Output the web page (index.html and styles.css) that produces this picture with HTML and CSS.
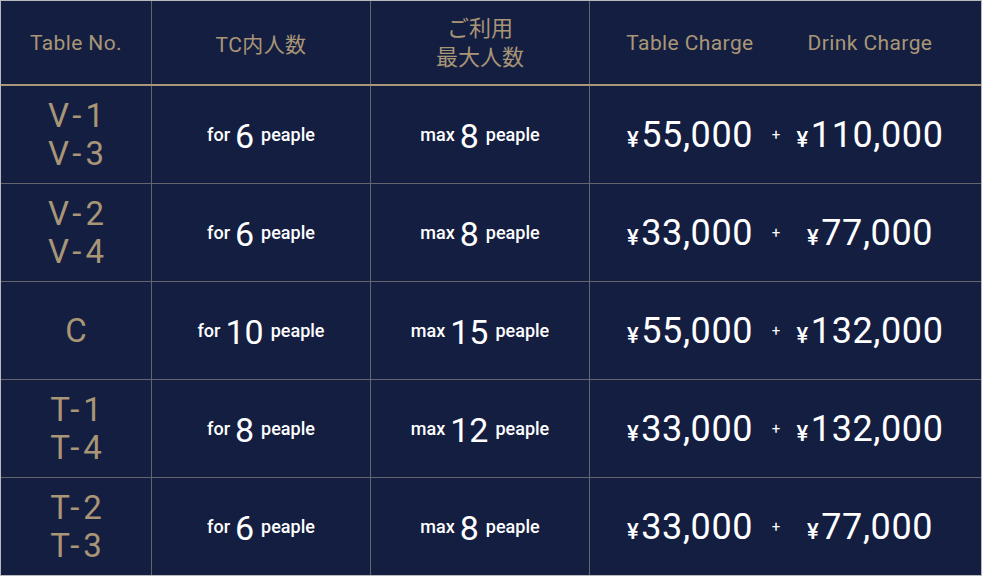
FILE: index.html
```html
<!DOCTYPE html>
<html lang="ja">
<head>
<meta charset="utf-8">
<link rel="stylesheet" href="styles.css">
</head>
<body>
<div class="price-table">
  <div class="row head">
    <div class="cell">Table No.</div>
    <div class="cell">TC内人数</div>
    <div class="cell cjk">ご利用<br>最大人数</div>
    <div class="cell charges">
      <span class="c-left">Table Charge</span>
      <span class="c-plus"></span>
      <span class="c-right">Drink Charge</span>
    </div>
  </div>

  <div class="row">
    <div class="cell tno">V-1<br>V-3</div>
    <div class="cell ppl">for <b>6</b> peaple</div>
    <div class="cell ppl">max <b>8</b> peaple</div>
    <div class="cell charges">
      <span class="c-left price"><i>¥</i>55,000</span>
      <span class="c-plus">+</span>
      <span class="c-right price"><i>¥</i>110,000</span>
    </div>
  </div>

  <div class="row">
    <div class="cell tno">V-2<br>V-4</div>
    <div class="cell ppl">for <b>6</b> peaple</div>
    <div class="cell ppl">max <b>8</b> peaple</div>
    <div class="cell charges">
      <span class="c-left price"><i>¥</i>33,000</span>
      <span class="c-plus">+</span>
      <span class="c-right price"><i>¥</i>77,000</span>
    </div>
  </div>

  <div class="row">
    <div class="cell tno">C</div>
    <div class="cell ppl">for <b>10</b> peaple</div>
    <div class="cell ppl">max <b>15</b> peaple</div>
    <div class="cell charges">
      <span class="c-left price"><i>¥</i>55,000</span>
      <span class="c-plus">+</span>
      <span class="c-right price"><i>¥</i>132,000</span>
    </div>
  </div>

  <div class="row">
    <div class="cell tno">T-1<br>T-4</div>
    <div class="cell ppl">for <b>8</b> peaple</div>
    <div class="cell ppl">max <b>12</b> peaple</div>
    <div class="cell charges">
      <span class="c-left price"><i>¥</i>33,000</span>
      <span class="c-plus">+</span>
      <span class="c-right price"><i>¥</i>132,000</span>
    </div>
  </div>

  <div class="row last">
    <div class="cell tno">T-2<br>T-3</div>
    <div class="cell ppl">for <b>6</b> peaple</div>
    <div class="cell ppl">max <b>8</b> peaple</div>
    <div class="cell charges">
      <span class="c-left price"><i>¥</i>33,000</span>
      <span class="c-plus">+</span>
      <span class="c-right price"><i>¥</i>77,000</span>
    </div>
  </div>
</div>
</body>
</html>
```
FILE: styles.css
```css
* { box-sizing: border-box; }
html, body { margin: 0; padding: 0; background: #ffffff; }
body {
  font-family: Roboto, "Noto Sans CJK JP", sans-serif;
}
.price-table {
  width: 982px;
  height: 576px;
  background: #141e41;
  border: 1px solid #b9b9bd;
  display: flex;
  flex-direction: column;
}
.row {
  display: grid;
  grid-template-columns: 151px 219px 219px 1fr;
  height: 98px;
  border-bottom: 1px solid #64666f;
}
.row.head {
  height: 85px;
  border-bottom: 2px solid #a99677;
}
.row.last {
  border-bottom: none;
  flex: 1;
}
.cell {
  display: flex;
  align-items: center;
  justify-content: center;
  text-align: center;
  border-right: 1px solid #64666f;
}
.cell:last-child { border-right: none; }

.head .cell {
  color: #a99677;
  font-size: 21px;
  letter-spacing: 0.4px;
}
.head .cell.cjk {
  font-family: "Noto Sans CJK JP", sans-serif;
  font-size: 22px;
  line-height: 29px;
  letter-spacing: 0;
  padding-bottom: 4px;
}

.tno {
  color: #a99677;
  font-size: 33px;
  line-height: 38px;
  letter-spacing: 4px;
  padding-left: 4px;
}
.ppl {
  color: #ffffff;
  font-size: 18px;
  font-weight: 500;
}
.ppl b {
  font-size: 34px;
  font-weight: 400;
  margin: 0 7px 0 5px;
  position: relative;
  top: 1px;
}

.charges {
  display: grid;
  grid-template-columns: 1fr 0 1fr;
  padding: 0 21px 0 10px;
  align-items: center;
}
.charges > span { text-align: center; }
.c-plus {
  display: flex;
  justify-content: center;
  color: #ffffff;
  font-size: 15px;
  width: 0;
  overflow: visible;
  margin-left: -4px;
}
.price {
  color: #ffffff;
  font-size: 36px;
  font-weight: 400;
  letter-spacing: 0.6px;
  white-space: nowrap;
}
.price i {
  font-style: normal;
  font-size: 22px;
  font-weight: 500;
  margin-right: 2px;
}
```
